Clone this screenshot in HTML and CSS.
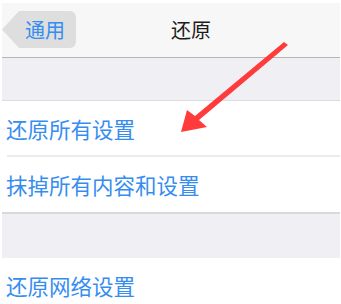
FILE: index.html
```html
<!DOCTYPE html>
<html lang="zh">
<head>
<meta charset="utf-8">
<title>还原</title>
<link rel="stylesheet" href="styles.css">
</head>
<body>
<div class="page">
  <header class="nav">
    <div class="back">通用</div>
    <div class="title">还原</div>
  </header>
  <div class="gap gap-first"></div>
  <div class="group">
    <div class="row row-sep">还原所有设置</div>
    <div class="row">抹掉所有内容和设置</div>
  </div>
  <div class="gap gap-second"></div>
  <div class="group">
    <div class="row">还原网络设置</div>
  </div>
  <svg class="arrow" width="341" height="304" viewBox="0 0 341 304" aria-hidden="true">
    <polygon points="284,42 288,45 199,120 207,127 181,132 187,110 195,116" fill="#ff3b3b"/>
  </svg>
</div>
</body>
</html>
```

FILE: styles.css
```css
html, body {
  margin: 0;
  padding: 0;
  background: #ffffff;
}

body {
  font-family: "Noto Sans CJK SC", "Noto Sans", sans-serif;
  width: 341px;
  height: 304px;
  overflow: hidden;
}

.page {
  position: relative;
  padding: 3px 1px 0 2px;
  height: 301px;
  overflow: hidden;
}

.nav {
  display: flex;
  align-items: flex-start;
  height: 55px;
  padding-top: 8px;
  box-sizing: border-box;
  background: #f7f7f7;
  border-bottom: 1px solid #b6b6b6;
}

.back {
  display: flex;
  align-items: center;
  height: 37px;
  padding: 0 11px 0 23px;
  background: #dedede;
  border-radius: 6px;
  clip-path: polygon(17px 0, 100% 0, 100% 100%, 17px 100%, 0 50%);
  color: #368df0;
  font-size: 20px;
  line-height: 1;
}

.title {
  margin-left: 95px;
  height: 37px;
  display: flex;
  align-items: center;
  color: #1c1c1c;
  font-size: 20px;
  line-height: 1;
}

.gap {
  background: #efeff4;
}

.gap-first {
  height: 42px;
  border-bottom: 1px solid #dcdcdf;
}

.gap-second {
  height: 44px;
  border-top: 2px solid #d9d9dc;
}

.group {
  background: #ffffff;
}

.row {
  display: flex;
  align-items: center;
  height: 55px;
  padding-left: 4px;
  color: #368df0;
  font-size: 21.5px;
  line-height: 1;
}

.row-sep {
  position: relative;
}

.row-sep::after {
  content: "";
  position: absolute;
  left: 5px;
  right: 0;
  bottom: -1px;
  height: 2px;
  background: #ececee;
}

.row-sep + .row {
  margin-top: 1px;
}

.arrow {
  position: absolute;
  top: 0;
  left: 0;
  pointer-events: none;
}
```
